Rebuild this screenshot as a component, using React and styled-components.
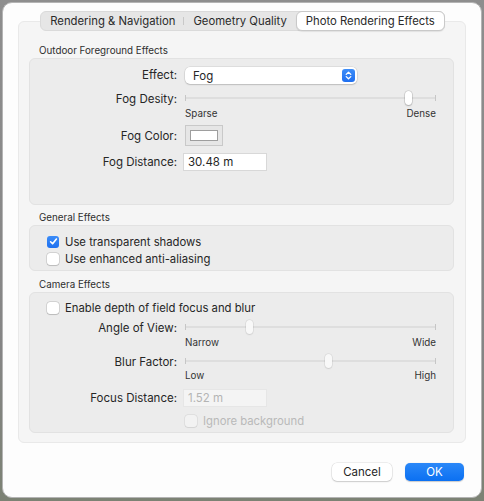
import React from 'react'
import styled, { createGlobalStyle } from 'styled-components'

const GlobalStyle = createGlobalStyle`
  html, body { margin: 0; padding: 0; }
  body {
    width: 484px;
    height: 501px;
    overflow: hidden;
    background: linear-gradient(180deg, #8e8e8e 0%, #858585 70%, #7c8274 100%);
    font-family: Inter, "Noto Sans", sans-serif;
    color: #262626;
  }
`

const Window = styled.div`
  box-sizing: border-box;
  margin: 2px 0 0 2px;
  width: 480px;
  height: 496px;
  border-radius: 10px;
  border: 1px solid #b4b4b4;
  background: #fdfdfd;
  display: flex;
  flex-direction: column;
  padding: 8px 14px 0 15px;
`

const TabBar = styled.div`
  align-self: center;
  position: relative;
  z-index: 1;
  display: flex;
  align-items: stretch;
  height: 20px;
  margin: 0 0 -10px 0;
  border-radius: 6px;
  background: #e6e6e6;
  border: 1px solid #dadada;
  box-sizing: border-box;
`

const Tab = styled.div`
  position: relative;
  display: flex;
  align-items: center;
  justify-content: center;
  padding: 0 9px;
  font-size: 11.3px;
  color: #2a2a2a;
  border-radius: 6px;
  ${p => p.$active && `
    background: #ffffff;
    margin: -1px -1px -1px 0;
    border: 1px solid #c9c9c9;
    box-shadow: 0 1px 1px rgba(0,0,0,0.08);
  `}
  ${p => p.$divider && `
    &::after {
      content: '';
      position: absolute;
      right: 0;
      top: 5px;
      bottom: 5px;
      width: 1px;
      background: #c8c8c8;
    }
  `}
`

const Panel = styled.div`
  box-sizing: border-box;
  width: 448px;
  height: 422px;
  background: #f5f5f5;
  border: 1px solid #e9e9e9;
  border-radius: 6px;
  padding: 22px 11px 0 10px;
  display: flex;
  flex-direction: column;
`

const SectionTitle = styled.div`
  font-size: 9.8px;
  line-height: 13px;
  padding-left: 10px;
  margin: ${p => p.$gap || 0}px 0 1px;
  color: #2e2e2e;
`

const Group = styled.div`
  box-sizing: border-box;
  height: ${p => p.$h}px;
  background: #ececec;
  border: 1px solid #e2e2e2;
  border-radius: 6px;
  display: flex;
  flex-direction: column;
  padding-top: ${p => p.$pt}px;
`

const FormRow = styled.div`
  display: grid;
  grid-template-columns: 147px 1fr;
  column-gap: 8px;
  align-items: ${p => p.$align || 'center'};
  margin-top: ${p => p.$gap || 0}px;
`

const Label = styled.div`
  text-align: right;
  font-size: 11.5px;
  line-height: ${p => p.$lh || 16}px;
  color: #262626;
`

const PopUp = styled.div`
  box-sizing: border-box;
  width: 172px;
  height: 17px;
  background: #ffffff;
  border-radius: 5px;
  box-shadow: 0 0 0 0.5px rgba(0,0,0,0.12), 0 1px 1.5px rgba(0,0,0,0.15);
  display: flex;
  align-items: center;
  justify-content: space-between;
  padding: 0 2px 0 8px;
  font-size: 11.5px;
`

const Stepper = styled.span`
  width: 13px;
  height: 13px;
  border-radius: 3px;
  background: linear-gradient(180deg, #3d8df8, #1f6ff0);
  display: flex;
  align-items: center;
  justify-content: center;
`

const SliderWrap = styled.div`
  width: 251px;
  display: flex;
  flex-direction: column;
`

const Track = styled.div`
  position: relative;
  height: 16px;
  &::before {
    content: '';
    position: absolute;
    left: 0;
    right: 0;
    top: 7px;
    height: 2px;
    border-radius: 1px;
    background: #dedede;
  }
`

const Tick = styled.span`
  position: absolute;
  top: 5px;
  width: 1px;
  height: 6px;
  background: #c6c6c6;
  ${p => (p.$end ? 'right: 0;' : 'left: 0;')}
`

const Knob = styled.span`
  position: absolute;
  top: 1px;
  width: 7px;
  height: 14px;
  margin-left: -3.5px;
  border-radius: 4px;
  background: ${p => (p.$disabled ? '#f8f8f8' : '#ffffff')};
  box-shadow: 0 0 0 0.5px rgba(0,0,0,${p => (p.$disabled ? 0.1 : 0.18)}), 0 1px 1.5px rgba(0,0,0,${p => (p.$disabled ? 0.08 : 0.2)});
`

const TickLabels = styled.div`
  display: flex;
  justify-content: space-between;
  font-size: 9.8px;
  line-height: 11px;
  color: #333;
  margin-top: ${p => p.$gap}px;
`

const ColorWell = styled.div`
  box-sizing: border-box;
  width: 38px;
  height: 21px;
  background: #e6e6e6;
  border: 1px solid #c9c9c9;
  padding: 4px;
  display: flex;
  span {
    flex: 1;
    background: #fff;
    border: 1px solid #9e9e9e;
  }
`

const TextField = styled.div`
  box-sizing: border-box;
  width: 84px;
  height: 18px;
  margin-left: -2px;
  background: ${p => (p.$disabled ? '#f4f4f4' : '#ffffff')};
  border: 1px solid ${p => (p.$disabled ? '#e6e6e6' : '#d8d8d8')};
  padding: 0 4px;
  font-size: 11.5px;
  line-height: 16px;
  color: ${p => (p.$disabled ? '#b4b4b4' : '#262626')};
`

const CheckRow = styled.label`
  display: flex;
  align-items: center;
  gap: 6px;
  height: 17px;
  padding-left: ${p => p.$indent}px;
  font-size: 11.3px;
  color: ${p => (p.$disabled ? '#b9b9b9' : '#262626')};
`

const Box = styled.span`
  box-sizing: border-box;
  width: 12px;
  height: 12px;
  border-radius: 3px;
  display: flex;
  align-items: center;
  justify-content: center;
  background: ${p => (p.$checked ? 'linear-gradient(180deg, #3b8cf8, #1f71f0)' : p.$disabled ? '#f2f2f2' : '#ffffff')};
  box-shadow: ${p =>
    p.$checked
      ? 'none'
      : `0 0 0 0.5px rgba(0,0,0,${p.$disabled ? 0.1 : 0.2}), 0 0.5px 1px rgba(0,0,0,${p.$disabled ? 0.05 : 0.12})`};
`

const Footer = styled.div`
  display: flex;
  justify-content: flex-end;
  gap: 13px;
  margin-top: 20px;
  padding-right: 3px;
`

const Button = styled.button`
  box-sizing: border-box;
  width: ${p => p.$w}px;
  height: 18px;
  border: none;
  border-radius: 5px;
  font-family: inherit;
  font-size: 11.5px;
  padding: 0;
  color: ${p => (p.$primary ? '#ffffff' : '#262626')};
  background: ${p => (p.$primary ? 'linear-gradient(180deg, #2b88f8, #0b70f2)' : '#ffffff')};
  box-shadow: ${p =>
    p.$primary
      ? '0 0.5px 1px rgba(0,0,0,0.2)'
      : '0 0 0 0.5px rgba(0,0,0,0.12), 0 1px 1.5px rgba(0,0,0,0.15)'};
`

function Check({ checked, disabled, children, indent = 17 }) {
  return (
    <CheckRow $indent={indent} $disabled={disabled}>
      <Box $checked={checked} $disabled={disabled}>
        {checked && (
          <svg width="9" height="9" viewBox="0 0 9 9">
            <path d="M1.6 4.8 L3.6 6.8 L7.4 2" fill="none" stroke="#fff" strokeWidth="1.6" strokeLinecap="round" strokeLinejoin="round" />
          </svg>
        )}
      </Box>
      {children}
    </CheckRow>
  )
}

function Slider({ value, min, max, disabled, gap = 2 }) {
  return (
    <SliderWrap>
      <Track>
        <Tick />
        <Tick $end />
        <Knob $disabled={disabled} style={{ left: `${value * 100}%` }} />
      </Track>
      <TickLabels $gap={gap}>
        <span>{min}</span>
        <span>{max}</span>
      </TickLabels>
    </SliderWrap>
  )
}

export default function App() {
  return (
    <>
      <GlobalStyle />
      <Window>
        <TabBar>
          <Tab $divider>Rendering &amp; Navigation</Tab>
          <Tab>Geometry Quality</Tab>
          <Tab $active>Photo Rendering Effects</Tab>
        </TabBar>
        <Panel>
          <SectionTitle>Outdoor Foreground Effects</SectionTitle>
          <Group $h={147} $pt={8}>
            <FormRow>
              <Label $lh={17}>Effect:</Label>
              <PopUp>
                Fog
                <Stepper>
                  <svg width="7" height="9" viewBox="0 0 7 9">
                    <path d="M1.2 3.4 L3.5 1.2 L5.8 3.4 M1.2 5.6 L3.5 7.8 L5.8 5.6" fill="none" stroke="#fff" strokeWidth="1.3" strokeLinecap="round" strokeLinejoin="round" />
                  </svg>
                </Stepper>
              </PopUp>
            </FormRow>
            <FormRow $gap={6} $align="start">
              <Label $lh={18}>Fog Desity:</Label>
              <Slider value={0.89} min="Sparse" max="Dense" />
            </FormRow>
            <FormRow $gap={6}>
              <Label>Fog Color:</Label>
              <ColorWell><span /></ColorWell>
            </FormRow>
            <FormRow $gap={7}>
              <Label>Fog Distance:</Label>
              <TextField>30.48 m</TextField>
            </FormRow>
          </Group>

          <SectionTitle $gap={6}>General Effects</SectionTitle>
          <Group $h={46} $pt={7}>
            <Check checked>Use transparent shadows</Check>
            <Check>Use enhanced anti-aliasing</Check>
          </Group>

          <SectionTitle $gap={7}>Camera Effects</SectionTitle>
          <Group $h={141} $pt={6}>
            <Check>Enable depth of field focus and blur</Check>
            <FormRow $gap={3} $align="start">
              <Label $lh={18}>Angle of View:</Label>
              <Slider value={0.255} min="Narrow" max="Wide" disabled />
            </FormRow>
            <FormRow $gap={5} $align="start">
              <Label $lh={19}>Blur Factor:</Label>
              <Slider value={0.57} min="Low" max="High" disabled gap={1} />
            </FormRow>
            <FormRow $gap={8}>
              <Label>Focus Distance:</Label>
              <TextField $disabled>1.52 m</TextField>
            </FormRow>
            <FormRow $gap={5}>
              <span />
              <Check disabled indent={0}>Ignore background</Check>
            </FormRow>
          </Group>
        </Panel>
        <Footer>
          <Button $w={60}>Cancel</Button>
          <Button $w={59} $primary>OK</Button>
        </Footer>
      </Window>
    </>
  )
}
